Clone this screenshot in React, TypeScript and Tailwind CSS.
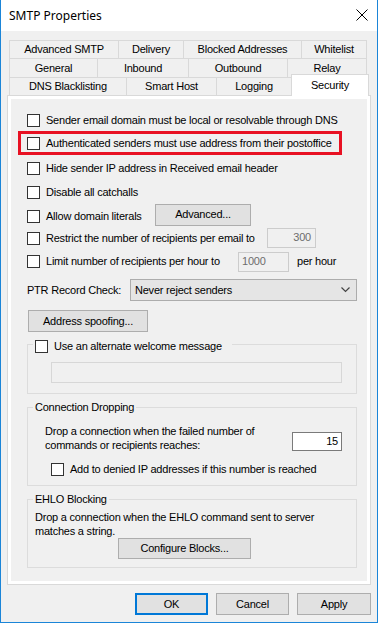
import React from "react";

const Box = ({ className = "" }: { className?: string }) => (
  <span className={`block w-[13px] h-[13px] shrink-0 border border-[#333333] bg-white ${className}`} />
);

const Tab = ({ label, w, first }: { label: string; w: string; first?: boolean }) => (
  <div
    className={`${w} ${first ? "" : "-ml-px"} h-full border-t border-l border-r border-[#d9d9d9] bg-[#f0f0f0] flex items-center justify-center whitespace-nowrap`}
  >
    {label}
  </div>
);

const Btn = ({ label, className = "" }: { label: string; className?: string }) => (
  <div
    className={`flex items-center justify-center bg-[#e1e1e1] border border-[#adadad] whitespace-nowrap ${className}`}
  >
    {label}
  </div>
);

export default function App() {
  return (
    <div className="w-[378px] h-[623px] bg-[#f0f0f0] border-l border-r border-b border-[#1b85d8] flex flex-col text-[11px] leading-[13px] tracking-[-0.22px] whitespace-nowrap text-black font-['Liberation_Sans',Arial,sans-serif]">
      {/* Title bar */}
      <div className="h-[31px] shrink-0 bg-white flex items-center justify-between pl-[8px] pr-[9px]">
        <span className="text-[12px] tracking-normal font-['Noto_Sans',sans-serif] text-black">SMTP Properties</span>
        <svg width="12" height="12" viewBox="0 0 12 12" className="mb-[1px]">
          <path d="M0.5 0.5 L11.5 11.5 M11.5 0.5 L0.5 11.5" stroke="#000" strokeWidth="1" fill="none" />
        </svg>
      </div>

      {/* Tabs */}
      <div className="mt-[9px] ml-[8px] flex flex-col">
        <div className="flex h-[18px]">
          <Tab label="Advanced SMTP" w="w-[110px]" first />
          <Tab label="Delivery" w="w-[66px]" />
          <Tab label="Blocked Addresses" w="w-[119px]" />
          <Tab label="Whitelist" w="w-[66px]" />
        </div>
        <div className="flex h-[19px]">
          <Tab label="General" w="w-[89px]" first />
          <Tab label="Inbound" w="w-[92px]" />
          <Tab label="Outbound" w="w-[100px]" />
          <Tab label="Relay" w="w-[80px]" />
        </div>
        <div className="flex h-[18px] items-start">
          <Tab label="DNS Blacklisting" w="w-[118px]" first />
          <Tab label="Smart Host" w="w-[91px]" />
          <Tab label="Logging" w="w-[76px]" />
          <div className="-ml-px -mt-[3px] w-[78px] h-[22px] relative z-10 bg-white border-t border-l border-r border-[#d9d9d9] flex items-start justify-center pt-[4px]">
            Security
          </div>
        </div>
      </div>

      {/* Panel */}
      <div className="ml-[6px] w-[364px] h-[490px] shrink-0 border border-[#d9d9d9] bg-white p-[3px]">
        <div className="h-full bg-[#f0f0f0] flex flex-col">
          {/* Row A */}
          <div className="mt-[11px] ml-[16px] h-[21px] flex items-center gap-[6px]">
            <Box />
            <span>Sender email domain must be local or resolvable through DNS</span>
          </div>
          {/* Row B red highlight */}
          <div className="ml-[7px] w-[324px] h-[24px] border-[3px] border-[#e81123] flex items-center gap-[6px] pl-[6px]">
            <Box />
            <span>Authenticated senders must use address from their postoffice</span>
          </div>
          {/* Row C */}
          <div className="ml-[16px] h-[26px] flex items-center gap-[6px]">
            <Box />
            <span>Hide sender IP address in Received email header</span>
          </div>
          {/* Row D */}
          <div className="ml-[16px] h-[22px] flex items-center gap-[6px]">
            <Box />
            <span>Disable all catchalls</span>
          </div>
          {/* Row E */}
          <div className="ml-[16px] h-[23px] flex items-center">
            <div className="w-[128px] flex items-center gap-[6px] mt-[3px]">
              <Box />
              <span>Allow domain literals</span>
            </div>
            <Btn label="Advanced..." className="w-[96px] h-[22px]" />
          </div>
          {/* Row F */}
          <div className="ml-[16px] h-[23px] flex items-center">
            <div className="w-[240px] flex items-center gap-[6px] mt-[1px]">
              <Box />
              <span>Restrict the number of recipients per email to</span>
            </div>
            <div className="w-[49px] h-[20px] border border-[#cccccc] bg-[#f0f0f0] flex items-center justify-end pr-[4px] text-[#6d6d6d]">
              300
            </div>
          </div>
          {/* Row G */}
          <div className="ml-[16px] h-[25px] flex items-center">
            <div className="w-[211px] flex items-center gap-[6px]">
              <Box />
              <span>Limit number of recipients per hour to</span>
            </div>
            <div className="w-[51px] h-[20px] border border-[#cccccc] bg-[#f0f0f0] flex items-center pl-[3px] text-[#6d6d6d]">
              1000
            </div>
            <span className="ml-[8px]">per hour</span>
          </div>
          {/* Row H PTR */}
          <div className="mt-[5px] ml-[16px] h-[22px] flex items-center">
            <span className="w-[103px]">PTR Record Check:</span>
            <div className="w-[227px] h-[22px] bg-[#e5e5e5] border border-[#acacac] flex items-center justify-between pl-[4px] pr-[6px]">
              <span>Never reject senders</span>
              <svg width="9" height="6" viewBox="0 0 9 6">
                <path d="M0.5 0.5 L4.5 4.5 L8.5 0.5" stroke="#444" strokeWidth="1.2" fill="none" />
              </svg>
            </div>
          </div>
          {/* Row I */}
          <Btn label="Address spoofing..." className="mt-[9px] ml-[17px] w-[120px] h-[22px]" />

          {/* Group 1 */}
          <div className="mt-[12px] ml-[16px] w-[330px] h-[50px] shrink-0 border border-[#dcdcdc] relative pt-[17px] pl-[23px]">
            <div className="absolute left-[5px] top-[-5px] px-[2px] bg-[#f0f0f0] flex items-center gap-[6px]">
              <Box />
              <span className="pr-[8px]">Use an alternate welcome message</span>
            </div>
            <div className="w-[291px] h-[21px] border border-[#d7d7d7] bg-[#f0f0f0]" />
          </div>

          {/* Group 2 */}
          <div className="mt-[13px] ml-[16px] w-[330px] h-[79px] shrink-0 border border-[#dcdcdc] relative pt-[16px]">
            <div className="absolute left-[5px] top-[-7px] px-[2px] bg-[#f0f0f0]">Connection Dropping</div>
            <div className="flex pl-[17px]">
              <div className="w-[247px] leading-[14px]">
                Drop a connection when the failed number of
                <br />
                commands or recipients reaches:
              </div>
              <div className="mt-[8px] w-[50px] h-[19px] border border-[#7a7a7a] bg-white flex items-center justify-end pr-[3px]">
                15
              </div>
            </div>
            <div className="mt-[11px] pl-[23px] h-[13px] flex items-center gap-[6px]">
              <Box />
              <span>Add to denied IP addresses if this number is reached</span>
            </div>
          </div>

          {/* Group 3 */}
          <div className="mt-[13px] ml-[16px] w-[330px] h-[69px] shrink-0 border border-[#dcdcdc] relative pt-[10px] pl-[7px]">
            <div className="absolute left-[5px] top-[-7px] px-[2px] bg-[#f0f0f0]">EHLO Blocking</div>
            <div className="leading-[14px]">
              Drop a connection when the EHLO command sent to server
              <br />
              matches a string.
            </div>
            <Btn label="Configure Blocks..." className="ml-[83px] w-[133px] h-[21px]" />
          </div>
        </div>
      </div>

      {/* Bottom buttons */}
      <div className="mt-[8px] pr-[6px] flex justify-end gap-[8px]">
        <div className="w-[73px] h-[22px] flex items-center justify-center bg-[#e1e1e1] border-2 border-[#0078d7]">OK</div>
        <Btn label="Cancel" className="w-[73px] h-[22px]" />
        <Btn label="Apply" className="w-[74px] h-[22px]" />
      </div>
    </div>
  );
}
